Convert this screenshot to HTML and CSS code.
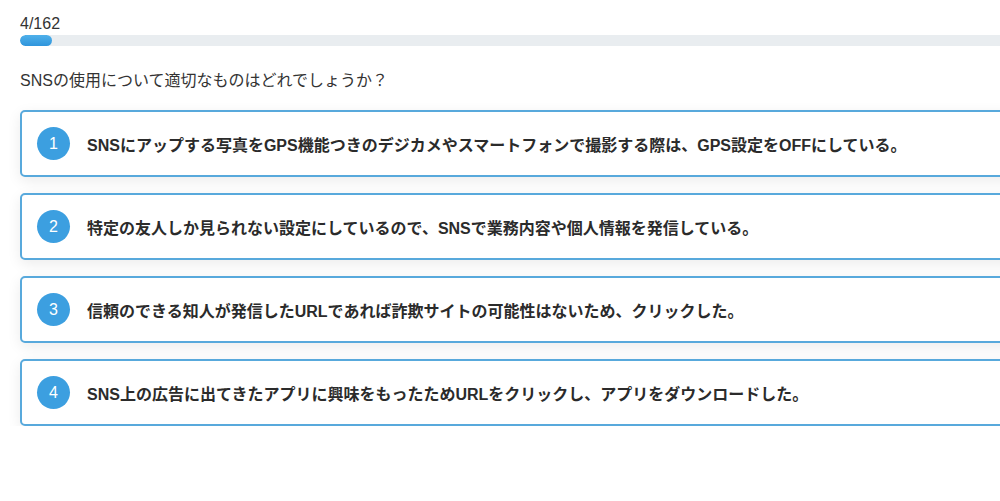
FILE: index.html
```html
<!DOCTYPE html>
<html lang="ja">
<head>
<meta charset="utf-8">
<title>Quiz</title>
<link rel="stylesheet" href="styles.css">
</head>
<body>
<div class="page">
  <div class="progress">
    <div class="progress-label">4/162</div>
    <div class="progress-track"><div class="progress-fill" style="width: 2.47%"></div></div>
  </div>
  <p class="question">SNSの使用について適切なものはどれでしょうか？</p>
  <ul class="choices">
    <li class="choice"><span class="num">1</span><span class="choice-text">SNSにアップする写真をGPS機能つきのデジカメやスマートフォンで撮影する際は、GPS設定をOFFにしている。</span></li>
    <li class="choice"><span class="num">2</span><span class="choice-text">特定の友人しか見られない設定にしているので、SNSで業務内容や個人情報を発信している。</span></li>
    <li class="choice"><span class="num">3</span><span class="choice-text">信頼のできる知人が発信したURLであれば詐欺サイトの可能性はないため、クリックした。</span></li>
    <li class="choice"><span class="num">4</span><span class="choice-text">SNS上の広告に出てきたアプリに興味をもったためURLをクリックし、アプリをダウンロードした。</span></li>
  </ul>
</div>
</body>
</html>
```
FILE: styles.css
```css
html, body {
  margin: 0;
  padding: 0;
  background: #ffffff;
  overflow: hidden;
}
body {
  font-family: "Liberation Sans", "Noto Sans CJK JP", sans-serif;
  color: #333333;
}
.page {
  width: 1296px;
  padding: 14px 0 0 20px;
}
.progress-label {
  font-size: 16px;
  line-height: 19px;
  color: #333;
}
.progress-track {
  margin-top: 2px;
  height: 11px;
  background: #e9edf0;
  border-radius: 6px;
  overflow: hidden;
}
.progress-fill {
  height: 100%;
  background: linear-gradient(to bottom, #4fb0ea, #2f95dc);
  border-radius: 6px;
}
.question {
  margin: 24px 0 0 0;
  font-size: 16px;
  line-height: 22px;
  color: #333;
}
.choices {
  list-style: none;
  margin: 18px 0 0 0;
  padding: 0;
  display: flex;
  flex-direction: column;
  gap: 16px;
}
.choice {
  display: flex;
  align-items: center;
  gap: 17px;
  height: 63px;
  padding: 0 15px;
  background: #ffffff;
  border: 2px solid #58a9dc;
  border-radius: 5px;
  box-shadow: 0 4px 14px rgba(0, 0, 0, 0.08);
}
.num {
  flex: none;
  width: 33px;
  height: 33px;
  border-radius: 50%;
  background: #3c9fe0;
  color: #ffffff;
  font-size: 16px;
  display: flex;
  align-items: center;
  justify-content: center;
}
.choice-text {
  font-size: 16px;
  font-weight: bold;
  color: #2b2b2b;
  white-space: nowrap;
}
```
